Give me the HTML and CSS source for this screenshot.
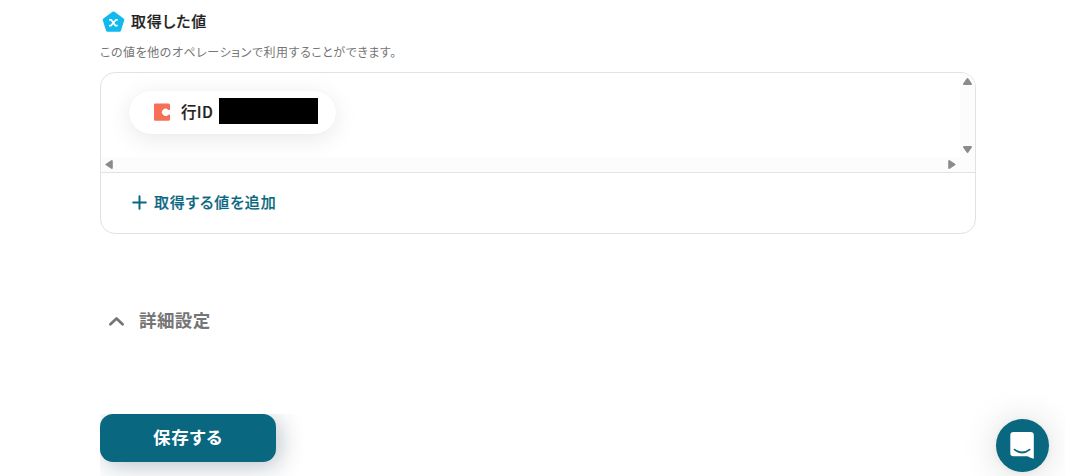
FILE: index.html
```html
<!DOCTYPE html>
<html lang="ja">
<head>
<meta charset="utf-8">
<title>取得した値</title>
<link rel="stylesheet" href="styles.css">
</head>
<body>
<main class="page">
  <h2 class="heading">
    <svg class="heading-icon" width="23" height="22" viewBox="0 0 23 22"><path d="M11.5 2.2 20.6 8.8 17.4 19H5.6L2.4 8.8Z" fill="#12b9ed" stroke="#12b9ed" stroke-width="3.4" stroke-linejoin="round"/><path d="M7.8 8.8H9.2L13.3 14.6H15M15.1 8.8H14L9 14.6H7.7" fill="none" stroke="#fff" stroke-width="1.7" stroke-linecap="round" stroke-linejoin="round"/></svg>
    <span>取得した値</span>
  </h2>
  <p class="note">この値を他のオペレーションで利用することができます。</p>
  <section class="card">
    <div class="scroller">
      <div class="viewport">
        <div class="chip">
          <svg width="18" height="18" viewBox="0 0 18 18"><path d="M2 -.5H15.5Q17 -.5 17 1V5.8Q15.9 6.3 15.1 5.7A3.6 3.6 0 1 0 15.1 10.9Q15.9 10.3 17 10.8V15.3Q17 16.8 15.5 16.8H2Q1 16.8 1 15.8V.5Q1 -.5 2 -.5Z" fill="#f86f57"/></svg>
          <span class="chip-label">行ID</span>
          <span class="redacted"></span>
        </div>
      </div>
      <div class="bar-v">
        <svg width="15" height="15" viewBox="0 0 15 15"><path d="M7.5 6 11 11H4Z" class="arrow"/></svg>
        <svg width="15" height="15" viewBox="0 0 15 15"><path d="M7.5 10 11 5H4Z" class="arrow"/></svg>
      </div>
      <div class="bar-h">
        <svg width="15" height="15" viewBox="0 0 15 15"><path d="M5.5 7.5 10.8 4V11Z" class="arrow"/></svg>
        <svg width="15" height="15" viewBox="0 0 15 15"><path d="M9.5 7.5 4.2 4V11Z" class="arrow"/></svg>
      </div>
      <div class="bar-corner"></div>
    </div>
    <div class="add">
      <svg width="16" height="16" viewBox="0 0 16 16"><path d="M8.5 1.2V13.8M2.2 7.5H14.8" stroke="#0a6780" stroke-width="2" stroke-linecap="round"/></svg>
      <span>取得する値を追加</span>
    </div>
  </section>
  <div class="details">
    <svg width="18" height="18" viewBox="0 0 18 18"><path d="M3.4 12.2 9.5 6.4 15.6 12.2" fill="none" stroke="#757575" stroke-width="2.7" stroke-linecap="round" stroke-linejoin="round"/></svg>
    <span>詳細設定</span>
  </div>
  <div class="actions"><button class="save" type="button">保存する</button></div>
</main>
<div class="launcher">
  <svg width="26" height="28" viewBox="0 0 26 28"><path d="M3.4 0H20.6Q23.8 0 23.8 3.3V26.8Q20.5 25.8 17.5 24.2H3.4Q.3 24.2 .3 21V3.3Q.3 0 3.4 0Z" fill="#fff"/><path d="M4.6 17.6Q12.1 23.5 19.6 17.6" fill="none" stroke="#0a6780" stroke-width="1.8" stroke-linecap="round"/></svg>
</div>
</body>
</html>
```
FILE: styles.css
```css
* { box-sizing: border-box; }
html, body { height: 100%; }
body {
  margin: 0;
  overflow: hidden;
  background: #fff;
  color: #222;
  font-family: "Noto Sans CJK JP", sans-serif;
  font-feature-settings: "palt";
}
svg { display: block; flex: none; overflow: visible; }
.page { width: 876px; margin-left: 100px; padding-top: 10px; }
.heading {
  display: flex;
  align-items: center;
  gap: 6px;
  height: 24px;
  margin: 0;
  padding-left: 2px;
  font-size: 15px;
  line-height: 20px;
  font-weight: 500;
  letter-spacing: .055em;
  -webkit-text-stroke: .2px;
}
.heading span { padding-bottom: 2px; }
.note {
  margin: 9px 0 11px;
  color: #757575;
  font-size: 12px;
  line-height: 18px;
  letter-spacing: .55px;
}
.card {
  height: 162px;
  overflow: hidden;
  border: 1px solid #e2e2e2;
  border-radius: 15px;
}
.scroller {
  display: grid;
  grid-template-columns: 1fr 15px;
  grid-template-rows: 84px 15px;
}
.viewport { overflow: hidden; padding: 18px 28px; }
.chip {
  display: flex;
  align-items: center;
  width: 207px;
  height: 43px;
  padding-left: 24px;
  border-radius: 22px;
  background: #fff;
  box-shadow: 0 0 2px rgba(0, 0, 0, .04), 0 5px 25px rgba(0, 0, 0, .09);
}
.chip-label {
  width: 37px;
  margin-left: 10px;
  padding-bottom: 4px;
  font-size: 15.5px;
  line-height: 20px;
  font-weight: 500;
  letter-spacing: .02em;
  -webkit-text-stroke: .2px;
}
.redacted { width: 99px; height: 26px; margin: 0 0 3px 1px; background: #000; }
.bar-v, .bar-h, .bar-corner { background: #fcfcfc; }
.bar-v, .bar-h { display: flex; justify-content: space-between; }
.bar-v { flex-direction: column; }
.arrow { fill: #8b8b8b; stroke: #8b8b8b; stroke-width: 2; stroke-linejoin: round; }
.add {
  display: flex;
  align-items: center;
  gap: 7px;
  height: 61px;
  padding-left: 30px;
  border-top: 1px solid #e2e2e2;
  color: #0a6780;
  font-size: 15px;
  line-height: 20px;
  font-weight: 500;
  letter-spacing: .055em;
  -webkit-text-stroke: .2px;
}
.add span { padding-bottom: 2px; }
.details {
  display: flex;
  align-items: center;
  gap: 14px;
  height: 28px;
  margin-top: 73px;
  padding-left: 7px;
  color: #757575;
  font-size: 17.5px;
  line-height: 24px;
  font-weight: 700;
  letter-spacing: .025em;
}
.details span { padding-bottom: 2px; }
.actions { height: 62px; margin-top: 79px; overflow: hidden; }
.save {
  display: block;
  width: 176px;
  height: 48px;
  padding: 0 0 2px;
  border: 0;
  border-radius: 13px;
  background: #0a6780;
  box-shadow: 4px 4px 24px rgba(8, 35, 60, .28);
  color: #fff;
  font: 700 17.5px/46px "Noto Sans CJK JP", sans-serif;
  font-feature-settings: "palt";
  letter-spacing: .045em;
}
.launcher {
  position: absolute;
  left: 996px;
  top: 419px;
  display: flex;
  align-items: center;
  justify-content: center;
  width: 53px;
  height: 53px;
  border-radius: 50%;
  background: #0a6780;
  box-shadow: 0 1px 6px rgba(0, 0, 0, .05), 0 2px 36px rgba(0, 0, 0, .15);
}
```
